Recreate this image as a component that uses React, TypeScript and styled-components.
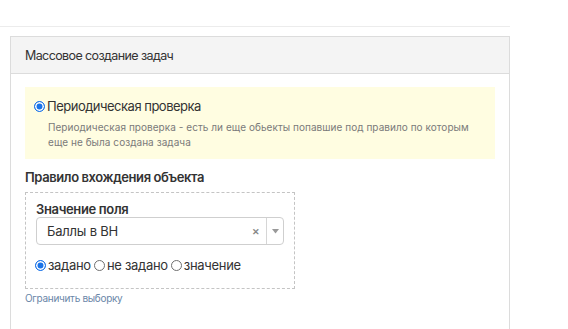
import React from "react";
import styled, { createGlobalStyle } from "styled-components";

const GlobalStyle = createGlobalStyle`
  body {
    margin: 0;
    background: #fff;
    font-family: Inter, "Noto Sans", sans-serif;
    color: #333;
  }
`;

const App = () => {
  return (
    <>
      <GlobalStyle />
      <TopBar />
      <Panel>
        <PanelHeader>Массовое создание задач</PanelHeader>
        <PanelBody>
          <Notice>
            <RadioLabel>
              <Radio checked />
              <NoticeTitle>Периодическая проверка</NoticeTitle>
            </RadioLabel>
            <NoticeText>
              Периодическая проверка - есть ли еще обьекты попавшие под правило по которым
              <br />
              еще не была создана задача
            </NoticeText>
          </Notice>
          <SectionTitle>Правило вхождения объекта</SectionTitle>
          <RuleBox>
            <FieldLabel>Значение поля</FieldLabel>
            <Select>
              <SelectValue>Баллы в ВН</SelectValue>
              <ClearBtn>✕</ClearBtn>
              <Divider />
              <Arrow>
                <svg width="7" height="5" viewBox="0 0 7 5">
                  <path d="M0 0 L7 0 L3.5 4.5 Z" fill="#999" />
                </svg>
              </Arrow>
            </Select>
            <RadioRow>
              <RadioLabel>
                <Radio checked />
                <span>задано</span>
              </RadioLabel>
              <RadioLabel>
                <Radio />
                <span>не задано</span>
              </RadioLabel>
              <RadioLabel>
                <Radio />
                <span>значение</span>
              </RadioLabel>
            </RadioRow>
          </RuleBox>
          <LimitLink>Ограничить выборку</LimitLink>
        </PanelBody>
      </Panel>
    </>
  );
};

const TopBar = styled.div`
  width: 510px;
  height: 26px;
  border-bottom: 1px solid #ececec;
`;
const Panel = styled.div`
  margin: 9px 0 0 10px;
  width: 498px;
  height: 300px;
  border: 1px solid #dcdcdc;
  border-bottom: none;
`;
const PanelHeader = styled.div`
  height: 36px;
  display: flex;
  align-items: center;
  padding-left: 14px;
  background: #f4f4f4;
  border-bottom: 1px solid #dcdcdc;
  font-size: 12.5px;
  letter-spacing: -0.6px;
  color: #333;
`;
const PanelBody = styled.div`
  padding: 13px 14px 0 14px;
`;
const Notice = styled.div`
  background: #fffde1;
  height: 72px;
  box-sizing: border-box;
  padding: 10px 0 0 9px;
`;
const RadioLabel = styled.label`
  display: flex;
  align-items: center;
  font-size: 13px;
  letter-spacing: -0.3px;
  color: #333;
  line-height: 18px;
`;
const NoticeTitle = styled.span`
  letter-spacing: -0.5px;
`;
const Radio = styled.span<{ checked?: boolean }>`
  width: 11px;
  height: 11px;
  border-radius: 50%;
  box-sizing: border-box;
  flex-shrink: 0;
  margin: 0 2px 0 0;
  border: ${(p) => (p.checked ? "1px solid #1a73e8" : "1px solid #6f6f6f")};
  background: ${(p) => (p.checked ? "#1a73e8" : "#fff")};
  box-shadow: ${(p) => (p.checked ? "inset 0 0 0 1.5px #fff" : "none")};
`;
const NoticeText = styled.div`
  margin: 5px 0 0 14px;
  font-size: 10px;
  letter-spacing: 0.05px;
  line-height: 15px;
  color: #7a7a7a;
`;
const SectionTitle = styled.div`
  margin-top: 10px;
  font-size: 13px;
  letter-spacing: -0.4px;
  font-weight: 600;
  line-height: 16px;
  color: #333;
`;
const RuleBox = styled.div`
  margin-top: 7px;
  width: 270px;
  height: 97px;
  box-sizing: border-box;
  border: 1px dashed #c4c4c4;
  padding: 8px 10px 0 10px;
`;
const FieldLabel = styled.div`
  font-size: 13px;
  letter-spacing: -0.35px;
  font-weight: 600;
  line-height: 16px;
  color: #333;
`;
const Select = styled.div`
  height: 28px;
  box-sizing: border-box;
  border: 1px solid #cfcfcf;
  border-radius: 4px;
  display: flex;
  align-items: center;
  padding-left: 10px;
`;
const SelectValue = styled.span`
  flex: 1;
  font-size: 13px;
  letter-spacing: -0.2px;
  color: #333;
`;
const ClearBtn = styled.span`
  font-size: 9px;
  font-weight: 700;
  color: #888;
  margin-right: 6px;
`;
const Divider = styled.span`
  width: 1px;
  align-self: stretch;
  background: #d6d6d6;
`;
const Arrow = styled.span`
  width: 16px;
  display: flex;
  justify-content: center;
  align-items: center;
`;
const RadioRow = styled.div`
  display: flex;
  gap: 3px;
  margin-top: 11px;
  margin-left: -1px;
`;
const LimitLink = styled.div`
  margin-top: 2px;
  font-size: 10px;
  letter-spacing: -0.3px;
  line-height: 14px;
  color: #6a86a8;
`;

export default App;
